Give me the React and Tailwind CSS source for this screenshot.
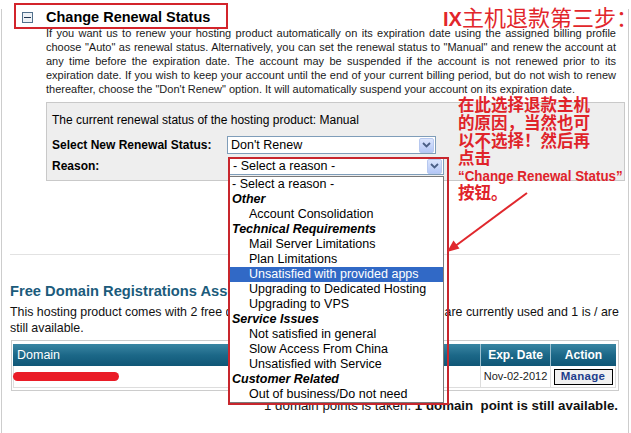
import React from 'react';

const paraLines = [
  'If you want us to renew your hosting product automatically on its expiration date using the assigned billing profile',
  'choose "Auto" as renewal status. Alternatively, you can set the renewal status to "Manual" and renew the account at',
  'any time before the expiration date. The account may be suspended if the account is not renewed prior to its',
  'expiration date. If you wish to keep your account until the end of your current billing period, but do not wish to renew',
];
const paraLast = 'thereafter, choose the "Don\'t Renew" option. It will automatically suspend your account on its expiration date.';

const reasons = [
  { label: '- Select a reason -', top: true },
  { label: 'Other', group: true },
  { label: 'Account Consolidation' },
  { label: 'Technical Requirements', group: true },
  { label: 'Mail Server Limitations' },
  { label: 'Plan Limitations' },
  { label: 'Unsatisfied with provided apps', active: true },
  { label: 'Upgrading to Dedicated Hosting' },
  { label: 'Upgrading to VPS' },
  { label: 'Service Issues', group: true },
  { label: 'Not satisfied in general' },
  { label: 'Slow Access From China' },
  { label: 'Unsatisfied with Service' },
  { label: 'Customer Related', group: true },
  { label: 'Out of business/Do not need' },
];

const Chevron = () => (
  <div className="w-[15px] h-[15px] mr-px rounded-[2px] border border-[#b7c8ef] bg-gradient-to-b from-[#dbe5fd] to-[#b4c7f6] flex items-center justify-center">
    <svg width="9" height="6" viewBox="0 0 9 6">
      <path d="M1 1 L4.5 4.5 L8 1" fill="none" stroke="#4b5f86" strokeWidth="1.8" />
    </svg>
  </div>
);

const SelectBox = ({ width, value }) => (
  <div className={`${width} h-[18px] bg-white border border-[#7f9db9] flex items-center justify-between`}>
    <span className="pl-[3px] text-[12.5px] leading-none">{value}</span>
    <Chevron />
  </div>
);

export default function App() {
  return (
    <div className="w-[631px] h-[433px] relative overflow-hidden bg-white text-black font-['Liberation_Sans',Arial,sans-serif]">
      <div className="ml-px w-[628px] h-full border-x border-[#cdcdcd]">
        {/* title */}
        <div className="flex items-center h-[17px] mt-[9px] pl-[20px]">
          <div className="w-[11px] h-[11px] border border-[#51708c] bg-[#eef2f6] flex items-center justify-center">
            <div className="w-[7px] h-px bg-[#1f3550]" />
          </div>
          <span className="ml-[13px] text-[14.5px] font-bold leading-none">Change Renewal Status</span>
        </div>

        {/* paragraph */}
        <div className="ml-[44px] w-[570px] text-[11px] leading-[14px] text-[#1a1a1a]">
          {paraLines.map((l, i) => (
            <div key={i} className="text-justify [text-align-last:justify] whitespace-nowrap">{l}</div>
          ))}
          <div>{paraLast}</div>
        </div>

        {/* renewal box */}
        <div className="ml-[44px] mt-[6px] w-[579px] h-[79px] border border-[#c9c9c9] bg-[#eeeeee] pl-[5px] pt-[9px]">
          <div className="text-[12px] leading-[16px]">
            The current renewal status of the hosting product: <span>Manual</span>
          </div>
          <div className="flex items-center mt-[8px]">
            <div className="w-[175px] text-[12px] font-bold">Select New Renewal Status:</div>
            <SelectBox width="w-[209px]" value="Don't Renew" />
          </div>
          <div className="flex items-center mt-[3px]">
            <div className="w-[177px] text-[12px] font-bold">Reason:</div>
            <SelectBox width="w-[215px]" value="- Select a reason -" />
          </div>
        </div>

        {/* divider */}
        <div className="mt-[73px] mx-[8px] h-px bg-[#e2e2e2]" />

        {/* free domain section */}
        <div className="pl-[8px] pr-[10px]">
          <div className="mt-[27px] text-[14.7px] font-bold leading-[18px] text-[#1b5b7b] whitespace-nowrap">
            Free Domain Registrations Associated
          </div>
          <div className="mt-[4px] text-[12.4px] leading-[16px] text-[#111]">
            <div className="whitespace-nowrap">
              This hosting product comes with 2 free{' '}
              <span className="inline-block w-[219px] overflow-hidden align-bottom">domain points, of which 1 is / </span>
              are currently used and 1 is / are
            </div>
            <div>still available.</div>
          </div>

          {/* table */}
          <div className="mt-[4px] ml-px w-[608px] border border-[#cccccc] pl-px pr-[2px] pt-[3px] pb-[2px]">
            <div className="flex h-[22px] bg-gradient-to-b from-[#3a86a3] via-[#1c6888] to-[#0f5676] text-white">
              <div className="flex-1 flex items-center pl-[4px] text-[12.5px]">Domain</div>
              <div className="w-[70px] border-l border-[#9cc0d0] flex items-center justify-center text-[12px] font-bold">Exp. Date</div>
              <div className="w-[66px] border-l border-[#9cc0d0] flex items-center justify-center text-[12px] font-bold">Action</div>
            </div>
            <div className="flex h-[22px] border-b border-[#dddddd]">
              <div className="flex-1 flex items-center border-l border-[#dddddd]">
                <div className="w-[106px] h-[9px] rounded-full bg-[#ea1c27] -ml-px" />
              </div>
              <div className="w-[70px] border-l border-[#dddddd] flex items-center justify-center text-[11px] text-[#222]">Nov-02-2012</div>
              <div className="w-[66px] border-x border-[#dddddd] flex items-center justify-center">
                <div className="w-[59px] h-[16px] border border-black bg-[#f1f1f1] flex items-center justify-center text-[11.5px] font-bold text-[#1d3d8c] tracking-[0.3px] leading-none">
                  Manage
                </div>
              </div>
            </div>
          </div>

          <div className="mt-[7px] text-right text-[13.3px] leading-[16px] text-[#111]">
            1 domain points is taken. <span className="font-bold">1 domain&nbsp; point is still available.</span>
          </div>
        </div>
      </div>

      {/* title highlight */}
      <div className="absolute left-[14px] top-[3px] w-[214px] h-[26px] border-2 border-[#d3242b]" />

      {/* open dropdown list */}
      <div className="absolute left-[229px] top-[176px] w-[215px] bg-white border border-[#7a7a7a] text-[12.5px] leading-[15px]">
        {reasons.map((r, i) => (
          <div
            key={i}
            className={
              'h-[15px] whitespace-nowrap ' +
              (r.group ? 'pl-[2px] font-bold italic' : r.top ? 'pl-[2px]' : 'pl-[19px]') +
              (r.active ? ' bg-[#3169c6] text-white' : '')
            }
          >
            {r.label}
          </div>
        ))}
      </div>
      <div className="absolute left-[228px] top-[157px] w-[221px] h-[248px] border-2 border-[#c8262d]" />

      {/* annotations */}
      <div className="absolute left-[443px] top-[2px] whitespace-nowrap text-[#e2262b] leading-[28px]">
        <span className="text-[20px] font-bold font-['Liberation_Sans',Arial,sans-serif]">IX</span>
        <span className="text-[22px] font-['Noto_Sans_CJK_SC',sans-serif]">主机退款第三步：</span>
      </div>
      <div className="absolute left-[458px] top-[95px] text-[#e0232a] font-bold font-['Noto_Sans_CJK_SC',sans-serif] text-[16.5px]">
        <div className="leading-[18px]">在此选择退款主机</div>
        <div className="leading-[18px]">的原因，当然也可</div>
        <div className="leading-[18px]">以不选择！然后再</div>
        <div className="leading-[17px]">点击</div>
        <div className="leading-[17px] w-[166px] whitespace-nowrap">
          <span className="inline-block origin-left scale-x-[0.89] text-[15px] font-['Liberation_Sans',Arial,sans-serif]">“Change Renewal Status”</span>
        </div>
        <div className="leading-[17px]">按钮。</div>
      </div>
      <svg className="absolute left-[440px] top-[185px]" width="100" height="75" viewBox="0 0 100 75">
        <line x1="87" y1="8" x2="14" y2="62" stroke="#e0282d" strokeWidth="2" />
        <polygon points="7,67 19.5,63.5 13.5,55.5" fill="#e0282d" />
      </svg>
    </div>
  );
}
